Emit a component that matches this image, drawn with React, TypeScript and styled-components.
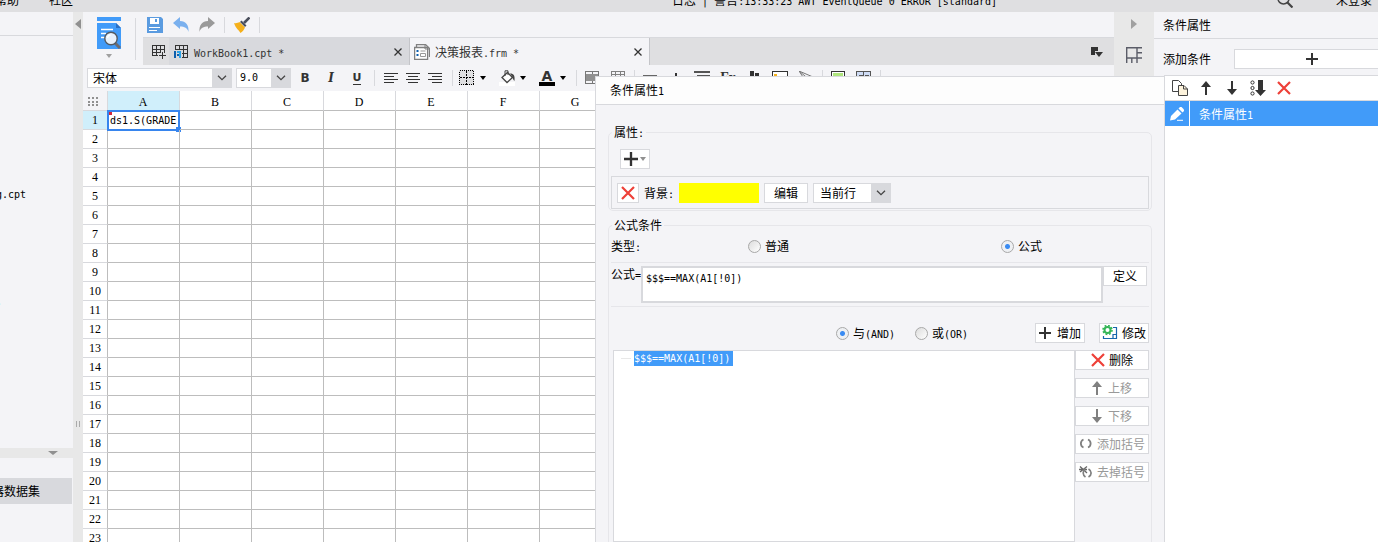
import React from "react";
import styled, { createGlobalStyle, css } from "styled-components";

const panel = "#f4f4f7";
const line = "#d8d9dd";
const softLine = "#e6e6ea";
const blue = "#419bf9";
const ink = "#333333";

const GlobalStyle = createGlobalStyle`
  * { box-sizing: border-box; }
  body {
    margin: 0;
    background: ${panel};
    color: #000;
    font: 12px/16px "Noto Sans CJK SC", sans-serif;
  }
  button, input, select, textarea { font: inherit; color: inherit; margin: 0; padding: 0; }
  svg { display: block; flex: none; }
`;

/* ---------- shared parts ---------- */

const Latin = styled.span`
  font-family: "DejaVu Sans Mono", monospace;
  font-size: 10px;
  line-height: 10px;
  white-space: pre;
`;

const PlainButton = styled.button<{ $w?: number }>`
  display: flex;
  align-items: center;
  justify-content: center;
  flex: none;
  width: ${(p) => (p.$w ? `${p.$w}px` : "auto")};
  border: 0;
  background: none;
`;

const BoxButton = styled.button<{ $w?: number; $gap?: number }>`
  display: flex;
  align-items: center;
  justify-content: center;
  flex: none;
  gap: ${(p) => p.$gap ?? 4}px;
  width: ${(p) => (p.$w ? `${p.$w}px` : "auto")};
  height: 20px;
  border: 1px solid ${line};
  background: #fff;
  white-space: nowrap;
  &:disabled { color: #999; }
`;

const SelectFrame = styled.span<{ $w: number }>`
  display: flex;
  flex: none;
  width: ${(p) => p.$w}px;
  height: 20px;
  border: 1px solid ${line};
  background: ${line};
`;

const SelectField = styled.select<{ $pad: number; $mono?: boolean }>`
  appearance: none;
  flex: 1;
  min-width: 0;
  border: 0;
  border-radius: 0;
  background: #fff;
  padding-left: ${(p) => p.$pad}px;
  line-height: 16px;
  ${(p) => p.$mono && css`font-family: "DejaVu Sans Mono", monospace; font-size: 10px;`}
`;

const SelectArrow = styled.span`
  display: flex;
  align-items: center;
  justify-content: center;
  width: 19px;
`;

function Select(props: { w: number; pad: number; value: string; label: string; mono?: boolean }) {
  return (
    <SelectFrame $w={props.w}>
      <SelectField $pad={props.pad} $mono={props.mono} aria-label={props.label}>
        <option>{props.value}</option>
      </SelectField>
      <SelectArrow>
        <svg width="10" height="6" viewBox="0 0 10 6"><path d="M1 .8 5 4.6 9 .8" fill="none" stroke="#444" strokeWidth="1.3" /></svg>
      </SelectArrow>
    </SelectFrame>
  );
}

const Radio = styled.input.attrs({ type: "radio" })`
  appearance: none;
  flex: none;
  width: 13px;
  height: 13px;
  border: 1px solid #a8a8a8;
  border-radius: 50%;
  background: linear-gradient(135deg, #dcdcdc, #fff);
  &:checked { background: radial-gradient(circle, #3a8bf2 0 2px, #eef0f3 3px); }
`;

const RadioLabel = styled.label`
  display: flex;
  align-items: center;
  gap: 4px;
  white-space: nowrap;
`;

/* ---------- icons ---------- */

const Icon = ({ w = 16, h = 16, crisp = false, children }: { w?: number; h?: number; crisp?: boolean; children: React.ReactNode }) => (
  <svg width={w} height={h} viewBox={`0 0 ${w} ${h}`} fill="none" shapeRendering={crisp ? "crispEdges" : "auto"}>{children}</svg>
);

const PreviewIcon = () => (
  <Icon w={24} h={32}>
    <path d="M0 0h24v4H0z" fill={blue} />
    <path d="M0 6h19l5 5v21H0z" fill={blue} />
    <path d="M19 6v5h5z" fill="#2a6fc4" />
    <path d="M4 12.5h12M4 16.5h5M4 20.5h4" stroke="#fff" strokeWidth="1.5" />
    <path d="m18 26 5 5" stroke="#6b6b70" strokeWidth="3" />
    <circle cx="14" cy="21.5" r="6.2" fill="#e8f1fb" stroke="#555a60" strokeWidth="1.4" />
    <path d="M10.5 21a3.5 3.5 0 0 1 3-3" stroke="#fff" strokeWidth="1.4" />
  </Icon>
);
const SaveIcon = () => (
  <Icon>
    <path d="M0 0h14l2 2v14H0z" fill="#5a9be0" />
    <path d="M3 1h9v6H3z" fill="#fff" /><path d="M8 2h2v3H8z" fill="#5a9be0" />
    <path d="M2 10.500h11M2 13.500h8" stroke="#fff" />
  </Icon>
);
const UndoIcon = () => <Icon><path d="M0 6 7 0v4c6 0 9 4 8.500 11-1-4-4-5.500-8.500-5.500V12z" fill="#7ab0ee" /></Icon>;
const RedoIcon = () => <Icon><path d="M16 6 9 0v4C3 4 0 8 .5 15c1-4 4-5.500 8.500-5.500V12z" fill="#9a9a9a" /></Icon>;
const BrushIcon = () => (
  <Icon>
    <path d="m15.500.500-5.500 5.500" stroke="#4a4f5c" strokeWidth="2.600" />
    <path d="m7.500 3.500 5 5-1.500 1.500-5-5z" fill="#4a4f5c" />
    <path d="M5.500 5 11 10.500c-1 2-2 4-4.500 5.500C5 13 2 12 0 6c2 .5 4 0 5.500-1z" fill="#f5b01a" />
  </Icon>
);
const NewSheetIcon = () => (
  <Icon crisp>
    <path d="M1.500 12V1.500h12v7M1 5.500h13M1 8.500h9M1 11.500h6M5.500 1v11M9.500 1v8M11.500 8v7M8 11.500h7" stroke={ink} />
  </Icon>
);
const WorkbookIcon = () => (
  <Icon crisp>
    <path d="M2.500 6V1.500h12v12H9M2 5.500h13M9 9.500h6M6.500 1v5M10.500 1v13" stroke={ink} />
    <path d="M1 7h2v7H1z" fill="#0d5fae" /><path d="M4 7h4v2H4z" fill="#2aa3e8" /><path d="M6 9h2v5H6z" fill="#2aa3e8" /><path d="M4 10h2v2H4z" fill="#0d5fae" />
  </Icon>
);
const FormIcon = () => (
  <Icon>
    <path d="M2.500 3V.5h9l4 4V13" stroke="#808080" strokeWidth="1.300" />
    <path d="M.6 3.500h13v12H.6z" fill="#fff" stroke="#808080" strokeWidth="1.300" />
    <path d="M11 .5V5h4.500" stroke="#808080" />
    <path d="M2.500 6h2v2h-2zM2.500 10h2v2h-2z" fill="#0d5fae" />
    <path d="M6.500 7h5M6.500 9.500h5v3h-5z" stroke="#999" />
  </Icon>
);
const CloseIcon = () => <Icon w={8} h={8}><path d="m.5.5 7 7m0-7-7 7" stroke="#333" strokeWidth="1.300" /></Icon>;
const TabListIcon = () => <Icon w={12} h={10}><path d="M0 0h7v4H4v4H0z" fill={ink} /><path d="M4 5h8L8 10z" fill={ink} /></Icon>;
const Caret = ({ color = "#000", w = 6 }: { color?: string; w?: number }) => (
  <svg width={w} height="4" viewBox="0 0 6 4" preserveAspectRatio="none"><path d="M0 0h6L3 4z" fill={color} /></svg>
);
const alignments = {
  left: "M0 .5h14M0 3.500h10M0 6.500h14M0 9.500h10",
  center: "M0 .5h14M2 3.500h10M0 6.500h14M2 9.500h10",
  right: "M0 .5h14M4 3.500h10M0 6.500h14M4 9.500h10",
};
const AlignIcon = ({ d }: { d: string }) => <Icon w={14} h={11} crisp><path d={d} stroke={ink} /></Icon>;
const BordersIcon = () => (
  <Icon crisp>
    <path d="M0 0h15v15H0z" fill="#dfdfe1" />
    <path d="M.5.5h14v14H.5z" stroke="#000" strokeDasharray="1 1" />
    <path d="M7.500 1v14M1 7.500h14" stroke="#000" strokeDasharray="2 1" />
  </Icon>
);
const FillIcon = () => (
  <Icon>
    <path d="M0 12h16v4H0z" fill="#fff" />
    <path d="M3 7.500 8.500 2.500l5 5-5.500 5z" fill="#fff" stroke="#444" strokeWidth="1.300" />
    <path d="M6 6V.8h3V5" stroke="#444" /><path d="M11 3.500c4 0 5 2 4.500 7.500-1-1-2-2.500-2-4z" fill="#444" />
  </Icon>
);
const MergeIcon = () => (
  <Icon w={14} h={14} crisp>
    <path d="M.5.5h13v12H.5z" stroke="#777" /><path d="M1 3h12v7H1z" fill="#909090" /><path d="M7.500 1v2M7.500 10v2" stroke="#777" />
  </Icon>
);
const UnmergeIcon = () => <Icon w={14} h={14} crisp><path d="M.5.5h13v12H.5zM1 3.500h12M1 8.500h12M4.500 1v12M9.500 1v12" stroke="#808080" /></Icon>;
const DashIcon = () => <Icon w={14} h={14} crisp><path d="M0 4.500h14" stroke="#666" /></Icon>;
const PlusSmallIcon = () => <Icon w={14} h={14} crisp><path d="M7 2v12M1 8h12" stroke={ink} strokeWidth="2" /></Icon>;
const ParagraphIcon = () => <Icon w={16} h={14} crisp><path d="M0 1h16M3 5h13M0 9h16" stroke="#555" strokeWidth="2" /></Icon>;
const ChartIcon = () => <Icon w={14} h={14} crisp><path d="M3 0h4v14H3zM8 2h4v12H8z" fill={ink} /></Icon>;
const PictureIcon = () => <Icon w={16} h={14} crisp><path d="M.5.5h15v12H.5z" fill="#fff" stroke={ink} /><path d="M2 3h3v3H2z" fill="#f5b01a" /></Icon>;
const SlashIcon = () => <Icon w={14} h={14}><path d="M0 0 14 6M0 0l8 12M0 0l12 10" stroke="#777" /></Icon>;
const GreenBoxIcon = () => <Icon w={14} h={14} crisp><path d="M.5.5h13v12H.5z" fill="#fff" stroke={ink} /><path d="M2 2h10v9H2z" fill="#aee57c" /></Icon>;
const BlueGridIcon = () => <Icon w={16} h={15} crisp><path d="M.5.5h14v13H.5z" fill="#cfdcf5" stroke="#555" /><path d="M3 4.500h4M9 4.500h4M7.500 1v13" stroke="#555" /></Icon>;
const PlusIcon = ({ s = 12 }: { s?: number }) => (
  <svg width={s} height={s} viewBox="0 0 12 12"><path d="M6 0v12M0 6h12" stroke={ink} strokeWidth="2" /></svg>
);
const CrossIcon = () => <Icon w={14} h={14}><path d="m1 1 12 12M13 1 1 13" stroke="#ee4038" strokeWidth="2.200" /></Icon>;
const ArrowUpIcon = ({ color = ink }: { color?: string }) => <Icon w={10} h={14}><path d="M5 2v12" stroke={color} strokeWidth="2" /><path d="m5 0 5 6H0z" fill={color} /></Icon>;
const ArrowDownIcon = ({ color = ink }: { color?: string }) => <Icon w={10} h={14}><path d="M5 0v12" stroke={color} strokeWidth="2" /><path d="m5 14 5-6H0z" fill={color} /></Icon>;
const CopyIcon = () => (
  <Icon>
    <path d="M.5.5h6l3 3v8h-9z" fill="#fff" stroke="#444" />
    <path d="M6.500 5.500h5.500l3.500 3.500v6.500h-9z" fill="#fdf3dc" stroke="#444" /><path d="M11.500 5.500V9h4" stroke="#444" />
  </Icon>
);
const SortIcon = () => (
  <Icon>
    <circle cx="2.500" cy="2.500" r="1.600" stroke={ink} /><circle cx="2.500" cy="8" r="1.600" stroke={ink} /><circle cx="2.500" cy="13.500" r="1.600" stroke={ink} />
    <path d="M8 0h5v10h3l-5.500 6L5 10h3z" fill={ink} />
  </Icon>
);
const PencilIcon = () => (
  <Icon w={14} h={14}>
    <path d="M0 13.500 1 9l6.500-6.500 4 4L5 12.500z" fill="#fff" /><path d="m8.500 1.500 1.500-1.500h1.500L14 2.500V4l-1.500 1.500z" fill="#fff" /><path d="M7 13.300h6" stroke="#fff" />
  </Icon>
);
const GearBoxIcon = () => (
  <Icon>
    <path d="M11 2.500h3.500v11h-13V11M11 13V9.500h3.500" stroke="#1766ad" strokeWidth="1.200" />
    <circle cx="5.500" cy="5" r="3" stroke="#35b558" strokeWidth="2" />
    <circle cx="5.500" cy="5" r="4.500" stroke="#35b558" strokeWidth="1.600" strokeDasharray="1.800 1.734" />
  </Icon>
);
const ParensIcon = () => <Icon w={14} h={12}><path d="M4.500 1.500C1 3 1 8 4.500 9.500M9 1.500C12.500 3 12.500 8 9 9.500" stroke="#808080" strokeWidth="1.800" /></Icon>;
const NoParensIcon = () => (
  <Icon w={14} h={14}>
    <path d="M1 1.500 8 8M8 1.500 1 7M0 4.500h8" stroke="#666" strokeWidth="1.300" />
    <path d="M6 4C3.500 6 3.500 10 6.500 12M9.500 4c3.500 2 3.500 6 0 8" stroke="#808080" strokeWidth="1.700" />
  </Icon>
);
const FrameIcon = () => <Icon><path d="M.7 16V.7H16M11 .7V16M.7 11H16M5.800 11v5M11 5.800h5" stroke="#5b5d68" strokeWidth="1.400" /></Icon>;
const SearchIcon = () => <Icon><circle cx="6.500" cy="6.500" r="5.500" stroke="#444" strokeWidth="1.500" /><path d="m10.500 10.500 5 5" stroke="#444" strokeWidth="2.200" /></Icon>;

/* ---------- page frame ---------- */

const Page = styled.div`
  display: flex;
  flex-direction: column;
  height: 100vh;
  overflow: hidden;
`;

const MenuBar = styled.header`
  display: flex;
  align-items: flex-end;
  flex: none;
  height: 12px;
  overflow: hidden;
  background: #dfdfe1;
  white-space: nowrap;
`;

const MenuItems = styled.nav`
  display: flex;
  gap: 30px;
  margin-left: -5px;
  padding-bottom: 5px;
  line-height: 14px;
`;

const MenuLink = styled.a`
  color: #000;
  text-decoration: none;
`;

const LogLine = styled.div`
  flex: 1;
  margin-left: 599px;
  padding-bottom: 5px;
  line-height: 14px;
`;

const UserTools = styled.div`
  display: flex;
  align-items: flex-end;
  gap: 43px;
  padding-right: 6px;
`;

const SearchButton = styled(PlainButton)`
  padding-bottom: 4px;
`;

const UserName = styled.span`
  padding-bottom: 5px;
  line-height: 14px;
`;

const Body = styled.div`
  position: relative;
  display: flex;
  flex: 1;
  min-height: 0;
`;

/* ---------- left column ---------- */

const SideColumn = styled.aside`
  display: flex;
  flex-direction: column;
  flex: none;
  width: 73px;
  overflow: hidden;
`;

const FilePane = styled.section`
  flex: 1;
  min-height: 0;
`;

const PaneHeader = styled.div`
  height: 24px;
  border-bottom: 1px solid ${line};
`;

const FileList = styled.ul`
  display: flex;
  flex-direction: column;
  gap: 91px;
  margin: 0 0 0 -4px;
  padding: 149px 0 0;
  list-style: none;
  line-height: 16px;
`;

const PaneSplitter = styled.div`
  display: flex;
  align-items: center;
  justify-content: flex-end;
  flex: none;
  height: 10px;
  padding-right: 15px;
  background: #e8e8e8;
`;

const DataPane = styled.section`
  flex: none;
  height: 84px;
  padding-top: 20px;
`;

const DataRow = styled.div`
  display: flex;
  align-items: center;
  height: 26px;
  margin-right: 1px;
  background: ${line};
  white-space: nowrap;
`;

const DataName = styled.span`
  margin-left: -8px;
`;

const Splitter = styled.div`
  display: flex;
  flex-direction: column;
  align-items: center;
  justify-content: space-between;
  flex: none;
  width: 10px;
  padding: 7px 0 115px;
  background: #e8e8e8;
`;

const Grip = styled.span`
  width: 4px;
  height: 6px;
  border: solid #aaa;
  border-width: 0 1px;
`;

/* ---------- centre ---------- */

const Centre = styled.main`
  display: flex;
  flex-direction: column;
  flex: 1;
  min-width: 0;
  overflow: hidden;
`;

const TopTools = styled.div`
  display: flex;
  flex: none;
  height: 53px;
`;

const PreviewButton = styled.button`
  display: flex;
  flex-direction: column;
  align-items: center;
  gap: 5px;
  flex: none;
  width: 52px;
  padding-top: 5px;
  border: 0;
  background: none;
`;

const Divider = styled.span<{ $h: number }>`
  flex: none;
  width: 1px;
  height: ${(p) => p.$h}px;
  background: ${line};
`;

const PreviewDivider = styled(Divider)`
  margin: 6px 7px 0 0;
`;

const TopRight = styled.div`
  flex: 1;
  min-width: 0;
`;

const QuickTools = styled.div`
  display: flex;
  align-items: center;
  gap: 8px;
  height: 25px;
  padding-left: 3px;
`;

const QuickButton = styled(PlainButton)`
  width: 18px;
  height: 18px;
`;

const Tabs = styled.div`
  display: flex;
  height: 28px;
  background: #dfdfe1;
  border-top: 1px solid ${line};
`;

const NewTabButton = styled(PlainButton)`
  justify-content: flex-end;
  padding-right: 2px;
`;

const Tab = styled.div<{ $active?: boolean }>`
  display: flex;
  align-items: center;
  flex: none;
  gap: 5px;
  width: ${(p) => (p.$active ? 240 : 241)}px;
  padding: 0 7px 0 4px;
  border-right: 1px solid #c4c5c9;
  background: ${(p) => (p.$active ? panel : line)};
  color: ${ink};
`;

const TabTitle = styled.span`
  flex: 1;
  white-space: nowrap;
`;

const TabListButton = styled(PlainButton)`
  margin: 0 11px 0 auto;
`;

const FormatBar = styled.div`
  display: flex;
  align-items: center;
  flex: none;
  height: 26px;
  padding-left: 4px;
`;

const FormatGroup = styled.div<{ $gap?: number; $pad?: number }>`
  display: flex;
  align-items: center;
  flex: none;
  gap: ${(p) => p.$gap ?? 0}px;
  padding: 0 ${(p) => p.$pad ?? 0}px;
`;

const BarDivider = styled(Divider)`
  margin: 0 2px 0 3px;
`;

const Glyph = styled.span<{ $kind: "bold" | "italic" | "underline" | "color" }>`
  font-family: "DejaVu Sans", sans-serif;
  font-size: 12px;
  font-weight: bold;
  line-height: 14px;
  color: ${ink};
  ${(p) => p.$kind === "italic" && css`font-family: "DejaVu Serif", serif; font-style: italic;`}
  ${(p) => p.$kind === "underline" && css`border-bottom: 1px solid ${ink}; font-size: 11px; line-height: 12px;`}
  ${(p) => p.$kind === "color" && css`width: 16px; font-size: 14px; line-height: 12px; border-bottom: 4px solid #000;`}
`;

const FunctionGlyph = styled.span`
  font: bold 14px/16px "Liberation Serif", serif;
  color: ${ink};
`;

const DropButton = styled.button`
  display: flex;
  align-items: center;
  gap: 5px;
  width: 38px;
  padding: 0 0 0 4px;
  border: 0;
  background: none;
`;

/* ---------- sheet ---------- */

const SheetView = styled.div`
  flex: 1;
  min-height: 0;
  overflow: hidden;
  background: #fff;
`;

const Sheet = styled.table`
  width: 529px;
  table-layout: fixed;
  border-collapse: separate;
  border-spacing: 0;
  font: 12px/14px "Liberation Serif", serif;
`;

const Corner = styled.th`
  width: 25px;
  height: 20px;
  padding: 2px 0 0 5px;
  border-right: 1px solid ${line};
  border-bottom: 1px solid ${line};
  background: ${panel};
`;

const ColHead = styled.th<{ $on?: boolean }>`
  width: 72px;
  height: 20px;
  padding: 2px 1px 0 0;
  border-right: 1px solid ${line};
  border-bottom: 1px solid #bdbdbd;
  background: ${(p) => (p.$on ? "#d0effb" : "#fff")};
  font-weight: normal;
`;

const RowHead = styled.th<{ $on?: boolean }>`
  height: 19px;
  padding: 0;
  border-right: 1px solid #bdbdbd;
  border-bottom: 1px solid ${line};
  background: ${(p) => (p.$on ? "#d0effb" : "#fff")};
  font-weight: normal;
`;

const Cell = styled.td`
  position: relative;
  height: 19px;
  padding: 0 0 0 2px;
  border-right: 1px solid #bdbdbd;
  border-bottom: 1px solid #bdbdbd;
  line-height: 14px;
`;

const Selection = styled.span`
  position: absolute;
  inset: -1px -1px -2px -1px;
  border: 2px solid #3785ee;
  &::before {
    content: "";
    position: absolute;
    top: 0;
    left: 0;
    width: 3px;
    height: 3px;
    background: #d3263c;
  }
  &::after {
    content: "";
    position: absolute;
    right: -3px;
    bottom: -3px;
    width: 5px;
    height: 5px;
    background: #3785ee;
  }
`;

/* ---------- right strip and panel ---------- */

const Strip = styled.div`
  display: flex;
  flex-direction: column;
  align-items: center;
  gap: 18px;
  flex: none;
  width: 40px;
  padding-top: 7px;
  background: #e8e8e8;
`;

const RightPanel = styled.aside`
  display: flex;
  flex-direction: column;
  flex: none;
  width: 224px;
  overflow: hidden;
`;

const PanelTitle = styled.h2`
  height: 27px;
  margin: 0;
  padding: 5px 9px;
  border-bottom: 1px solid ${line};
  font-size: 12px;
  font-weight: normal;
`;

const AddRow = styled.div`
  display: flex;
  align-items: center;
  gap: 23px;
  height: 36px;
  padding: 4px 0 0 9px;
  white-space: nowrap;
`;

const ConditionList = styled.div`
  flex: 1;
  margin-left: 10px;
  border: solid ${line};
  border-width: 1px 0 0 1px;
  background: #fff;
`;

const ConditionTools = styled.div`
  display: flex;
  align-items: center;
  gap: 2px;
  height: 25px;
  padding-left: 3px;
  border-bottom: 1px solid ${line};
`;

const ConditionRow = styled.div`
  display: flex;
  align-items: stretch;
  height: 25px;
  background: ${blue};
  color: #fff;
`;

const EditCell = styled(PlainButton)`
  border-right: 1px solid #fff;
`;

const ConditionName = styled.span`
  align-self: center;
  padding-left: 9px;
`;

/* ---------- floating condition editor ---------- */

const Dialog = styled.section`
  position: absolute;
  top: 64px;
  right: 214px;
  bottom: 0;
  left: 595px;
  display: flex;
  flex-direction: column;
  border: solid ${line};
  border-width: 1px 0 0 1px;
  background: ${panel};
`;

const DialogTitle = styled.h2`
  flex: none;
  height: 28px;
  margin: 0;
  padding: 5px 14px;
  border-bottom: 1px solid ${line};
  background: #fdfdfd;
  font-size: 12px;
  font-weight: normal;
`;

const DialogBody = styled.form`
  display: flex;
  flex-direction: column;
  flex: 1;
  gap: 6px;
  min-height: 0;
  padding: 19px 12px 0;
`;

const Group = styled.fieldset<{ $open?: boolean }>`
  display: flex;
  flex-direction: column;
  flex: ${(p) => (p.$open ? "1" : "none")};
  min-width: 0;
  min-height: 0;
  margin: 0;
  padding: 0 2px ${(p) => (p.$open ? 0 : 1)}px;
  border: 1px solid ${softLine};
  border-bottom-width: ${(p) => (p.$open ? 0 : 1)}px;
  border-radius: ${(p) => (p.$open ? "5px 5px 0 0" : "5px")};
`;

const Legend = styled.legend`
  height: 16px;
  margin-left: 1px;
  padding: 0 2px;
  line-height: 16px;
`;

const AddProperty = styled(BoxButton)`
  margin: 9px 0 7px 9px;
`;

const PropertyRow = styled.div`
  display: flex;
  align-items: center;
  gap: 5px;
  height: 33px;
  padding: 0 5px;
  border: 1px solid ${line};
`;

const PropertyName = styled.span`
  width: 30px;
  white-space: nowrap;
`;

const Swatch = styled.button`
  width: 80px;
  height: 20px;
  border: 0;
  background: #ff0;
`;

const TypeRow = styled.div`
  display: flex;
  align-items: center;
  flex: none;
  height: 30px;
  padding-bottom: 3px;
  border-bottom: 1px solid ${softLine};
`;

const TypeName = styled.span`
  flex: none;
  width: 137px;
`;

const TypeOption = styled(RadioLabel)`
  flex: none;
  width: 253px;
`;

const FormulaRow = styled.div`
  display: flex;
  align-items: flex-start;
  flex: none;
  padding: 3px 2px 3px 0;
  border-bottom: 1px solid ${softLine};
`;

const FormulaLabel = styled.label`
  width: 30px;
  white-space: nowrap;
`;

const FormulaInput = styled.textarea`
  flex: 1;
  height: 37px;
  padding: 4px 3px;
  border: 2px solid ${line};
  border-radius: 0;
  background: #fff;
  resize: none;
  font: 10px/14px "DejaVu Sans Mono", monospace;
`;

const JoinRow = styled.div`
  display: flex;
  align-items: center;
  justify-content: flex-end;
  flex: none;
  padding: 16px 0 7px;
`;

const JoinOption = styled(RadioLabel)<{ $w: number }>`
  width: ${(p) => p.$w}px;
`;

const ChangeButton = styled(BoxButton)`
  margin-left: 14px;
`;

const TreeArea = styled.div`
  display: flex;
  flex: 1;
  min-height: 0;
  padding-left: 2px;
`;

const Tree = styled.ul`
  flex: 1;
  margin: 0;
  padding: 0 0 0 7px;
  border: 1px solid ${line};
  background: #fff;
  list-style: none;
`;

const TreeNode = styled.li`
  display: flex;
  align-items: center;
  height: 15px;
  &::before {
    content: "";
    width: 10px;
    height: 1px;
    margin-right: 3px;
    background: #e8e8e8;
  }
`;

const NodeText = styled(Latin)`
  width: 99px;
  background: ${blue};
  color: #fff;
  line-height: 15px;
`;

const TreeActions = styled.div`
  display: flex;
  flex-direction: column;
  gap: 8px;
  flex: none;
`;

const columns = "ABCDEFG".split("");
const rows = Array.from({ length: 40 }, (_, i) => i + 1);

export default function App() {
  return (
    <Page>
      <GlobalStyle />
      <MenuBar>
        <MenuItems>
          <MenuLink href="#help">帮助</MenuLink>
          <MenuLink href="#community">社区</MenuLink>
        </MenuItems>
        <LogLine>
          日志<Latin> | </Latin>警告<Latin>:13:33:23 AWT EventQueue 0 ERROR [standard]</Latin>
        </LogLine>
        <UserTools>
          <SearchButton aria-label="搜索"><SearchIcon /></SearchButton>
          <UserName>未登录</UserName>
        </UserTools>
      </MenuBar>

      <Body>
        <SideColumn>
          <FilePane>
            <PaneHeader />
            <FileList>
              <li><Latin>g.cpt</Latin></li>
              <li><Latin>.</Latin></li>
            </FileList>
          </FilePane>
          <PaneSplitter><Caret color="#909090" w={10} /></PaneSplitter>
          <DataPane>
            <DataRow><DataName>器数据集</DataName></DataRow>
          </DataPane>
        </SideColumn>
        <Splitter>
          <Icon w={6} h={10}><path d="M6 0v10L0 5z" fill="#909090" /></Icon>
          <Grip />
        </Splitter>

        <Centre>
          <TopTools>
            <PreviewButton aria-label="预览"><PreviewIcon /><Caret color="#a0a0a0" /></PreviewButton>
            <PreviewDivider $h={42} />
            <TopRight>
              <QuickTools>
                <QuickButton aria-label="保存"><SaveIcon /></QuickButton>
                <QuickButton aria-label="撤销"><UndoIcon /></QuickButton>
                <QuickButton aria-label="重做"><RedoIcon /></QuickButton>
                <Divider $h={16} />
                <QuickButton aria-label="格式刷"><BrushIcon /></QuickButton>
                <Divider $h={16} />
              </QuickTools>
              <Tabs>
                <NewTabButton $w={26} aria-label="新建"><NewSheetIcon /></NewTabButton>
                <Tab>
                  <WorkbookIcon />
                  <TabTitle><Latin>WorkBook1.cpt *</Latin></TabTitle>
                  <PlainButton aria-label="关闭"><CloseIcon /></PlainButton>
                </Tab>
                <Tab $active>
                  <FormIcon />
                  <TabTitle>决策报表<Latin>.frm *</Latin></TabTitle>
                  <PlainButton aria-label="关闭"><CloseIcon /></PlainButton>
                </Tab>
                <TabListButton aria-label="标签列表"><TabListIcon /></TabListButton>
              </Tabs>
            </TopRight>
          </TopTools>

          <FormatBar>
            <FormatGroup $gap={4}>
              <Select w={145} pad={5} value="宋体" label="字体" />
              <Select w={55} pad={3} value="9.0" label="字号" mono />
            </FormatGroup>
            <FormatGroup $pad={1}>
              <PlainButton $w={26} aria-label="加粗"><Glyph $kind="bold">B</Glyph></PlainButton>
              <PlainButton $w={26} aria-label="倾斜"><Glyph $kind="italic">I</Glyph></PlainButton>
              <PlainButton $w={26} aria-label="下划线"><Glyph $kind="underline">U</Glyph></PlainButton>
            </FormatGroup>
            <BarDivider $h={16} />
            <FormatGroup $pad={3}>
              <PlainButton $w={22} aria-label="左对齐"><AlignIcon d={alignments.left} /></PlainButton>
              <PlainButton $w={22} aria-label="居中"><AlignIcon d={alignments.center} /></PlainButton>
              <PlainButton $w={22} aria-label="右对齐"><AlignIcon d={alignments.right} /></PlainButton>
            </FormatGroup>
            <BarDivider $h={16} />
            <FormatGroup $gap={2}>
              <DropButton aria-label="边框"><BordersIcon /><Caret /></DropButton>
              <DropButton aria-label="填充"><FillIcon /><Caret /></DropButton>
              <DropButton aria-label="字体颜色"><Glyph $kind="color">A</Glyph><Caret /></DropButton>
            </FormatGroup>
            <BarDivider $h={16} />
            <FormatGroup>
              <PlainButton $w={26} aria-label="合并"><MergeIcon /></PlainButton>
              <PlainButton $w={26} aria-label="取消合并"><UnmergeIcon /></PlainButton>
            </FormatGroup>
            <BarDivider $h={16} />
            <FormatGroup>
              <PlainButton $w={26} aria-label="数据列"><DashIcon /></PlainButton>
              <PlainButton $w={26} aria-label="插入"><PlusSmallIcon /></PlainButton>
              <PlainButton $w={26} aria-label="富文本"><ParagraphIcon /></PlainButton>
              <PlainButton $w={26} aria-label="公式"><FunctionGlyph>Fx</FunctionGlyph></PlainButton>
              <PlainButton $w={26} aria-label="图表"><ChartIcon /></PlainButton>
              <PlainButton $w={26} aria-label="图片"><PictureIcon /></PlainButton>
              <PlainButton $w={26} aria-label="斜线"><SlashIcon /></PlainButton>
            </FormatGroup>
            <BarDivider $h={16} />
            <FormatGroup>
              <PlainButton $w={26} aria-label="悬浮元素"><GreenBoxIcon /></PlainButton>
              <PlainButton $w={26} aria-label="控件"><BlueGridIcon /></PlainButton>
            </FormatGroup>
            <BarDivider $h={16} />
          </FormatBar>

          <SheetView>
            <Sheet>
              <thead>
                <tr>
                  <Corner>
                    <Icon w={10} h={9} crisp><path d="M0 1h2m2 0h2m2 0h2M0 4.500h2m2 0h2m2 0h2M0 8h2m2 0h2m2 0h2" stroke="#909090" strokeWidth="2" /></Icon>
                  </Corner>
                  {columns.map((c) => <ColHead key={c} $on={c === "A"} scope="col">{c}</ColHead>)}
                </tr>
              </thead>
              <tbody>
                {rows.map((r) => (
                  <tr key={r}>
                    <RowHead $on={r === 1} scope="row">{r}</RowHead>
                    {columns.map((c) => (
                      <Cell key={c}>
                        {r === 1 && c === "A" && <><Latin>ds1.S(GRADE</Latin><Selection /></>}
                      </Cell>
                    ))}
                  </tr>
                ))}
              </tbody>
            </Sheet>
          </SheetView>
        </Centre>

        <Strip>
          <Icon w={6} h={10}><path d="M0 0v10l6-5z" fill="#a0a0a0" /></Icon>
          <PlainButton aria-label="单元格"><FrameIcon /></PlainButton>
        </Strip>

        <RightPanel>
          <PanelTitle>条件属性</PanelTitle>
          <AddRow>
            添加条件
            <BoxButton $w={156} aria-label="添加条件"><PlusIcon /></BoxButton>
          </AddRow>
          <ConditionList>
            <ConditionTools>
              <PlainButton $w={24} aria-label="复制"><CopyIcon /></PlainButton>
              <PlainButton $w={24} aria-label="上移"><ArrowUpIcon /></PlainButton>
              <PlainButton $w={24} aria-label="下移"><ArrowDownIcon /></PlainButton>
              <PlainButton $w={24} aria-label="排序"><SortIcon /></PlainButton>
              <PlainButton $w={24} aria-label="删除"><CrossIcon /></PlainButton>
            </ConditionTools>
            <ConditionRow>
              <EditCell $w={25} aria-label="编辑"><PencilIcon /></EditCell>
              <ConditionName>条件属性<Latin>1</Latin></ConditionName>
            </ConditionRow>
          </ConditionList>
        </RightPanel>

        <Dialog>
          <DialogTitle>条件属性<Latin>1</Latin></DialogTitle>
          <DialogBody>
            <Group>
              <Legend>属性<Latin>:</Latin></Legend>
              <AddProperty type="button" $w={30} $gap={2} aria-label="添加属性"><PlusIcon s={14} /><Caret color="#909090" /></AddProperty>
              <PropertyRow>
                <BoxButton type="button" $w={22} aria-label="删除属性"><CrossIcon /></BoxButton>
                <PropertyName>背景<Latin>:</Latin></PropertyName>
                <Swatch type="button" aria-label="背景颜色" />
                <BoxButton type="button" $w={44}>编辑</BoxButton>
                <Select w={78} pad={6} value="当前行" label="应用范围" />
              </PropertyRow>
            </Group>

            <Group $open>
              <Legend>公式条件</Legend>
              <TypeRow>
                <TypeName>类型<Latin>:</Latin></TypeName>
                <TypeOption><Radio name="kind" />普通</TypeOption>
                <TypeOption><Radio name="kind" defaultChecked />公式</TypeOption>
              </TypeRow>
              <FormulaRow>
                <FormulaLabel htmlFor="formula">公式<Latin>=</Latin></FormulaLabel>
                <FormulaInput id="formula" defaultValue="$$$==MAX(A1[!0])" />
                <BoxButton type="button" $w={44}>定义</BoxButton>
              </FormulaRow>
              <JoinRow>
                <JoinOption $w={79}><Radio name="join" defaultChecked /><span>与<Latin>(AND)</Latin></span></JoinOption>
                <JoinOption $w={120}><Radio name="join" /><span>或<Latin>(OR)</Latin></span></JoinOption>
                <BoxButton type="button" $w={50} $gap={6}><PlusIcon />增加</BoxButton>
                <ChangeButton type="button" $w={50}><GearBoxIcon />修改</ChangeButton>
              </JoinRow>
              <TreeArea>
                <Tree>
                  <TreeNode><NodeText>$$$==MAX(A1[!0])</NodeText></TreeNode>
                </Tree>
                <TreeActions>
                  <BoxButton type="button" $w={74}><CrossIcon />删除</BoxButton>
                  <BoxButton type="button" $w={74} $gap={6} disabled><ArrowUpIcon color="#808080" />上移</BoxButton>
                  <BoxButton type="button" $w={74} $gap={6} disabled><ArrowDownIcon color="#808080" />下移</BoxButton>
                  <BoxButton type="button" $w={74} disabled><ParensIcon />添加括号</BoxButton>
                  <BoxButton type="button" $w={74} disabled><NoParensIcon />去掉括号</BoxButton>
                </TreeActions>
              </TreeArea>
            </Group>
          </DialogBody>
        </Dialog>
      </Body>
    </Page>
  );
}
